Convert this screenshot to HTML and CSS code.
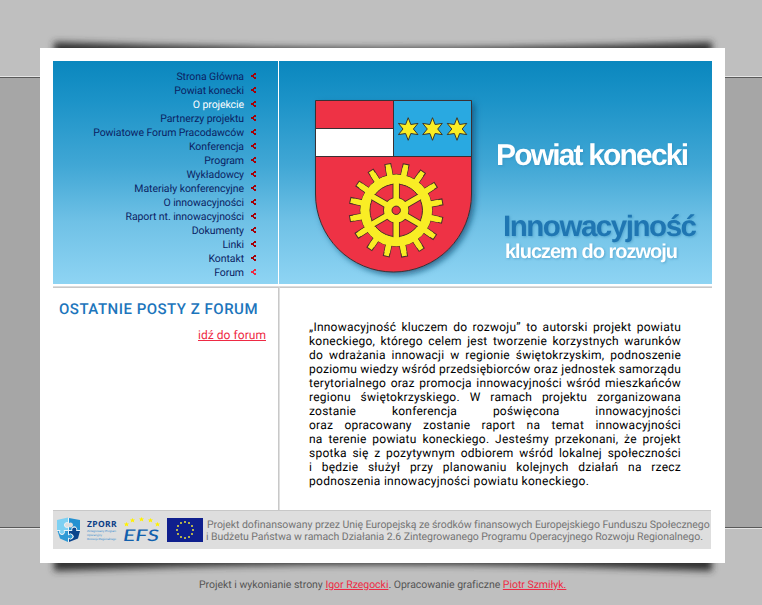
FILE: index.html
```html
<!DOCTYPE html>
<html lang="pl">
<head>
<meta charset="utf-8">
<title>Powiat konecki</title>
<link rel="stylesheet" href="styles.css">
</head>
<body>
<svg class="shadow" width="762" height="605" viewBox="0 0 762 605" aria-hidden="true">
  <defs><filter id="soft" x="-5%" y="-5%" width="110%" height="110%"><feGaussianBlur stdDeviation="3.500"/></filter></defs>
  <path filter="url(#soft)" d="M54 42Q382 54 712 42V571Q382 558 54 571Z"/>
</svg>
<div class="page">
  <div class="header">
    <ul class="menu">
      <li><a>Strona Główna</a></li>
      <li><a>Powiat konecki</a></li>
      <li class="current"><a>O projekcie</a></li>
      <li><a>Partnerzy projektu</a></li>
      <li><a>Powiatowe Forum Pracodawców</a></li>
      <li><a>Konferencja</a></li>
      <li><a>Program</a></li>
      <li><a>Wykładowcy</a></li>
      <li><a>Materiały konferencyjne</a></li>
      <li><a>O innowacyjności</a></li>
      <li><a>Raport nt. innowacyjności</a></li>
      <li><a>Dokumenty</a></li>
      <li><a>Linki</a></li>
      <li><a>Kontakt</a></li>
      <li class="forum"><a>Forum</a></li>
    </ul>
    <svg class="banner" width="433" height="223" viewBox="279 61 433 223">
      <defs>
        <filter id="drop" x="-10%" y="-10%" width="125%" height="125%"><feDropShadow dx="3" dy="3" stdDeviation="3" flood-color="#0b4a70" flood-opacity=".75"/></filter>
        <path id="star" d="M0-11.3 2.600-4.500 9.8-5.6 5.200 0 9.8 5.6 2.600 4.500 0 11.3-2.600 4.500-9.8 5.6-5.200 0-9.8-5.6-2.600-4.500Z"/>
        <g id="teeth">
          <path id="t4" d="M-3-47H3V-33H-3ZM47-3V3H33V-3ZM-3 47H3V33H-3ZM-47-3V3H-33V-3Z"/>
          <use href="#t4" transform="rotate(22.5)"/>
          <use href="#t4" transform="rotate(45)"/>
          <use href="#t4" transform="rotate(67.5)"/>
        </g>
        <path id="spokes" d="M0-28V28M-24.2-14 24.2 14M-24.2 14 24.2-14"/>
      </defs>
      <path filter="url(#drop)" fill="#ee3244" d="M315.5 100.5H471.5V194A78 78 0 0 1 315.5 194Z"/>
      <path fill="#fff" d="M316 128H393V156H316Z"/>
      <path fill="#29a9e1" d="M393.5 101H471V156H393.5Z"/>
      <path class="ink" d="M315.5 128.5H393.5M393.5 100.5V156.500M315.5 156.500H471.500M315.5 100.5H471.5V194A78 78 0 0 1 315.5 194Z"/>
      <g fill="#f9ed25" stroke="#3b372c" stroke-width="1">
        <use href="#star" x="408.200" y="129"/>
        <use href="#star" x="432.500" y="129"/>
        <use href="#star" x="457" y="129"/>
      </g>
      <g transform="translate(396.200 210.300)">
        <use href="#teeth" transform="rotate(12.200)" fill="#f9ed25" stroke="#4a2c2a"/>
        <circle r="36" fill="#f9ed25" stroke="#4a2c2a"/>
        <use href="#teeth" transform="rotate(12.200) scale(.92)" fill="#f9ed25"/>
        <circle r="26.300" fill="#ee3244" stroke="#4a2c2a"/>
        <use href="#spokes" stroke="#4a2c2a" stroke-width="7.200"/>
        <circle r="13" fill="#4a2c2a"/>
        <circle r="31.500" fill="none" stroke="#f9ed25" stroke-width="8.800"/>
        <use href="#spokes" stroke="#f9ed25" stroke-width="5.500"/>
        <circle r="12.200" fill="#f9ed25"/>
        <circle r="4.200" fill="#ee3244" stroke="#4a2c2a"/>
      </g>
      <g class="slogan">
        <text class="lit" x="496" y="165" font-size="30" textLength="193">Powiat konecki</text>
        <text class="deep" x="503" y="236" font-size="29.500" textLength="194">Innowacyjność</text>
        <text class="lit" x="505" y="258" font-size="20" textLength="173">kluczem do rozwoju</text>
      </g>
    </svg>
  </div>
  <div class="body">
    <div class="side">
      <h2>OSTATNIE POSTY Z FORUM</h2>
      <a class="go" href="#">idź do forum</a>
    </div>
    <div class="article">
      <p>„Innowacyjność kluczem do rozwoju” to autorski projekt powiatu</p>
      <p>koneckiego, którego celem jest tworzenie korzystnych warunków</p>
      <p>do wdrażania innowacji w regionie świętokrzyskim, podnoszenie</p>
      <p>poziomu wiedzy wśród przedsiębiorców oraz jednostek samorządu</p>
      <p>terytorialnego oraz promocja innowacyjności wśród mieszkańców</p>
      <p>regionu świętokrzyskiego. W ramach projektu zorganizowana</p>
      <p>zostanie konferencja poświęcona innowacyjności</p>
      <p>oraz opracowany zostanie raport na temat innowacyjności</p>
      <p>na terenie powiatu koneckiego. Jesteśmy przekonani, że projekt</p>
      <p>spotka się z pozytywnym odbiorem wśród lokalnej społeczności</p>
      <p>i będzie służył przy planowaniu kolejnych działań na rzecz</p>
      <p class="last">podnoszenia innowacyjności powiatu koneckiego.</p>
    </div>
  </div>
  <div class="funding">
    <svg class="logos" width="153" height="38" viewBox="53 511 153 38">
      <path fill="#7dd0f2" d="M57 520 68 517.500V523A2.500 2.500 0 1 0 68 527V530H64A2.500 2.500 0 1 1 60 530H57Z"/>
      <path fill="#2491d1" d="M69 518 80 520V530H76.500A2.500 2.500 0 1 0 72 530H69V527A2.500 2.500 0 1 0 69 523Z"/>
      <path fill="#2f9ad6" d="M57.500 531H60A2.500 2.500 0 1 0 64 531H68V535A2.500 2.500 0 1 1 68 538V542L60 538.500Z"/>
      <path fill="#0c458d" d="M69 531H72A2.500 2.500 0 1 1 76.500 531H80L78 538.500 69 542V538A2.500 2.500 0 1 0 69 535Z"/>
      <path fill="none" stroke="#e8f5fa" stroke-width=".9" d="M68.500 518V523A2.500 2.500 0 1 0 68.500 527V535A2.500 2.500 0 1 1 68.500 538V542M57 530.500H60A2.500 2.500 0 1 0 64 530.500H72A2.500 2.500 0 1 1 76.500 530.500H80"/>
      <text class="zporr" x="87" y="527" textLength="29.500">ZPORR</text>
      <g class="tiny">
        <text x="87" y="531.500" textLength="29">Zintegrowany Program</text>
        <text x="87" y="535.500" textLength="15">Operacyjny</text>
        <text x="87" y="539.500" textLength="29">Rozwoju Regionalnego</text>
      </g>
      <text class="efs" x="123" y="541" textLength="36" lengthAdjust="spacingAndGlyphs">EFS</text>
      <g fill="#fff100">
        <path id="s" d="M126.500 522l.8 1.600h1.800l-1.400 1.200.6 1.800-1.800-1.100-1.800 1.100.6-1.800-1.400-1.200h1.800z"/>
        <use href="#s" x="6" y="-4"/><use href="#s" x="15" y="-5"/><use href="#s" x="24" y="-4"/><use href="#s" x="31" y="0"/>
      </g>
      <path fill="#0f1f8e" d="M167 518H203V542H167Z"/>
      <g fill="#e9e13a">
        <circle cx="185" cy="522" r="1"/><circle cx="189" cy="523" r="1"/><circle cx="192" cy="526" r="1"/><circle cx="193" cy="530" r="1"/><circle cx="192" cy="534" r="1"/><circle cx="189" cy="537" r="1"/><circle cx="185" cy="538" r="1"/><circle cx="181" cy="537" r="1"/><circle cx="178" cy="534" r="1"/><circle cx="177" cy="530" r="1"/><circle cx="178" cy="526" r="1"/><circle cx="181" cy="523" r="1"/>
      </g>
    </svg>
    <div class="note">
      <p class="first">Projekt dofinansowany przez Unię Europejską ze środków finansowych Europejskiego Funduszu Społecznego</p>
      <p class="second">i Budżetu Państwa w ramach Działania 2.6 Zintegrowanego Programu Operacyjnego Rozwoju Regionalnego.</p>
    </div>
  </div>
</div>
<div class="credits">Projekt i wykonianie strony <a href="#">Igor Rzegocki</a>. Opracowanie graficzne <a href="#">Piotr Szmiłyk.</a></div>
</body>
</html>
```
FILE: styles.css
```css
* { box-sizing: border-box; margin: 0; padding: 0; }
html { height: 605px; overflow: hidden; }
body {
  height: 605px;
  overflow: hidden;
  padding: 48px 37px 0 40px;
  font: 10.5px/14px Roboto, "Liberation Sans", sans-serif;
  text-rendering: geometricPrecision;
  background: linear-gradient(#bfbfbf 76px, #e4e4e4 76px 77px, #595959 77px 78px, #a6a6a6 78px 527px, #595959 527px 528px, #e4e4e4 528px 529px, #bfbfbf 529px);
}
a { color: #ee2a44; }
.shadow { position: absolute; left: 0; top: 0; z-index: -1; fill: #333; }
.page { width: 685px; height: 515px; padding: 13px; background: #fff; }
.header {
  display: flex;
  width: 659px;
  height: 223px;
  background: linear-gradient(#0a87be, #1c93c8 18%, #41a7d5 47%, #6fc1e6 72%, #8ed4f3);
}
.menu { flex: none; width: 226px; padding: 8px 22px 0 0; border-right: 1px solid #fff; list-style: none; }
.menu li { display: flex; justify-content: flex-end; align-items: center; gap: 7px; height: 14px; color: #0b2263; }
.menu a { padding-top: 1px; color: inherit; letter-spacing: -.08px; white-space: nowrap; }
.menu li::after {
  content: "";
  width: 5px;
  height: 6px;
  background: #a50008;
  clip-path: polygon(0 33.3%, 40% 33.3%, 40% 16.7%, 60% 16.7%, 60% 0, 100% 0, 100% 33.3%, 60% 33.3%, 60% 66.7%, 100% 66.7%, 100% 100%, 60% 100%, 60% 83.3%, 40% 83.3%, 40% 66.7%, 0 66.7%);
}
.menu li.current { color: #fff; }
.menu li.forum::after { background: #ee2a44; }
.banner { display: block; }
.ink { fill: none; stroke: #3a3033; }
.slogan { font-family: "Liberation Sans", sans-serif; font-weight: bold; }
.lit { fill: #fff; filter: drop-shadow(1px 1px 1px #3187b880); }
.deep { fill: #1f76b2; filter: drop-shadow(1px 1px 1px #3187b880); }
.body { display: flex; width: 659px; height: 224px; margin-top: 2px; border-top: 1px solid #ddd; }
.side { display: flex; flex: none; flex-direction: column; width: 227px; padding: 13px 0 0 6px; border-right: 1px solid #e0e0e0; border-top: 1px solid #c8c8c8; box-shadow: inset -1px 0 #c8c8c8; }
.side h2 { font-size: 15px; line-height: 16px; font-weight: 500; color: #1c75bc; white-space: nowrap; letter-spacing: .5px; }
.go { align-self: flex-end; margin: 11px 13px 0 0; font-size: 12px; letter-spacing: .05px; }
.article { flex: 1; min-width: 0; padding: 32px 31px 0 29px; border-top: 1px solid #c8c8c8; font-size: 12px; color: #000; }
.article p { height: 14px; white-space: nowrap; text-align: justify; text-align-last: justify; letter-spacing: .24px; }
.article .last { text-align-last: left; letter-spacing: .3px; }
.funding { display: flex; width: 658px; height: 39px; border-top: 1px solid #c8c8c8; background: #dedede; }
.logos { display: block; flex: none; }
.zporr { font: bold 8.5px "Open Sans", sans-serif; fill: #0b3d86; }
.tiny { font: 3px "Liberation Sans", sans-serif; fill: #3c8fd0; }
.efs { font: italic 500 16px Lato, sans-serif; fill: #1260ad; }
.note { padding-top: 8px; line-height: 12px; color: #747474; white-space: nowrap; }
.first { letter-spacing: -.065px; padding-left: 1px; }
.second { letter-spacing: -.06px; }
.credits { margin: 15px 0 0 159px; color: #555; white-space: nowrap; letter-spacing: -.025px; }
```
